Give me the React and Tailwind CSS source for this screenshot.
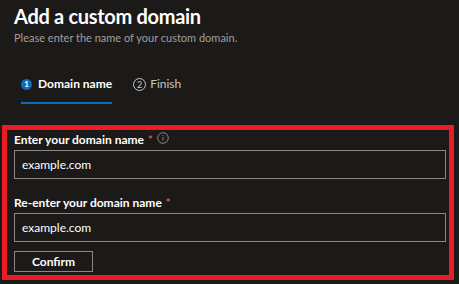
export default function App() {
  const font = { fontFamily: 'Lato, "Open Sans", sans-serif' };
  return (
    <div className="w-[459px] h-[284px] bg-[#1b1a19] overflow-hidden text-white" style={font}>
      <div className="pl-[14px] pt-[2px]">
        <h1 className="text-[20px] leading-[28px] font-bold text-white tracking-[-0.3px]">Add a custom domain</h1>
        <p className="text-[11px] leading-[14px] text-[#a19f9d] mt-[1px]">Please enter the name of your custom domain.</p>
      </div>
      <div className="flex items-start pl-[21px] mt-[33px] h-[47px]">
        <div className="flex flex-col">
          <div className="flex items-center gap-[6px] h-[12px]">
            <span className="w-[11px] h-[11px] rounded-full bg-[#0f6cbd] text-white text-[8px] font-bold flex items-center justify-center leading-none">1</span>
            <span className="text-[12px] font-bold text-white leading-none">Domain name</span>
          </div>
          <div className="h-[2px] bg-[#0f6cbd] mt-[12px]" />
        </div>
        <div className="flex items-center gap-[4px] h-[12px] ml-[21px]">
          <span className="w-[13px] h-[13px] rounded-full border border-[#c8c6c4] text-[#c8c6c4] text-[9px] flex items-center justify-center leading-none">2</span>
          <span className="text-[12px] text-[#c8c6c4] leading-none">Finish</span>
        </div>
      </div>
      <div className="ml-[2px] w-[452px] h-[155px] border-[5px] border-[#ec1c24] pl-[7px] pt-[3px]">
        <div className="flex items-center h-[13px] gap-[4px]">
          <span className="text-[12px] font-bold leading-none">Enter your domain name</span>
          <span className="text-[#f1707b] text-[11px] leading-none -mt-[1px]">*</span>
          <svg width="12" height="12" viewBox="0 0 12 12" className="-mt-[3px]">
            <circle cx="6" cy="6" r="5.3" fill="none" stroke="#8a8886" strokeWidth="1" />
            <rect x="5.5" y="5" width="1" height="3.5" fill="#8a8886" />
            <rect x="5.5" y="3" width="1" height="1" fill="#8a8886" />
          </svg>
        </div>
        <div className="mt-[4px] w-[432px] h-[29px] border border-[#8a8886] flex items-center pl-[7px] text-[12px]">example.com</div>
        <div className="flex items-center h-[13px] gap-[4px] mt-[17px]">
          <span className="text-[12px] font-bold leading-none">Re-enter your domain name</span>
          <span className="text-[#f1707b] text-[11px] leading-none -mt-[1px]">*</span>
        </div>
        <div className="mt-[4px] w-[432px] h-[29px] border border-[#8a8886] flex items-center pl-[7px] text-[12px]">example.com</div>
        <button className="mt-[9px] w-[79px] h-[21px] border border-[#8a8886] flex items-center justify-center text-[12px] font-bold leading-none">Confirm</button>
      </div>
    </div>
  );
}
